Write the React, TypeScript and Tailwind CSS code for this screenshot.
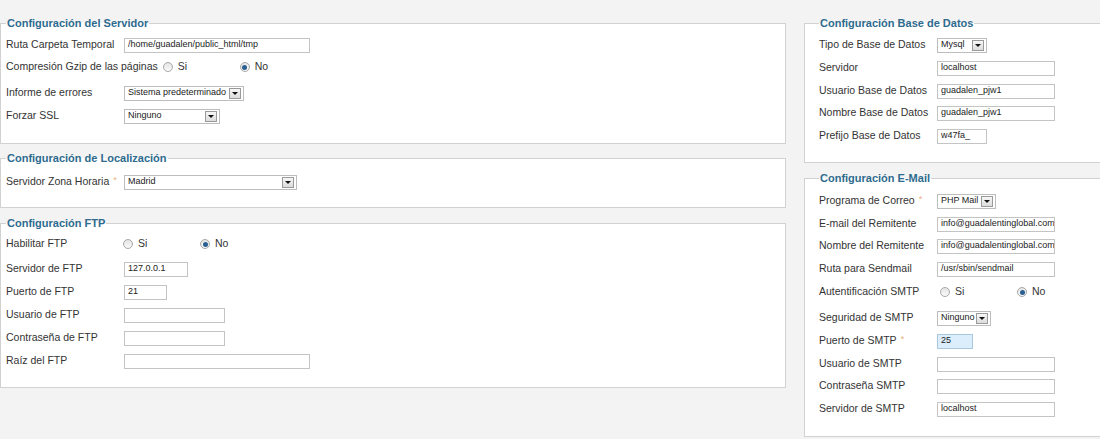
import React from "react";

const FONT = { fontFamily: '"Liberation Sans", Arial, sans-serif' };

function Label({ children, req, cls }: { children: React.ReactNode; req?: boolean; cls?: string }) {
  return (
    <div className={cls ?? "w-[118px] shrink-0"}>
      <span>{children}</span>
      {req && <span className="ml-[4px] text-[#eab07a] text-[9px] align-top">*</span>}
    </div>
  );
}

function Input({ value, w, blue }: { value?: string; w: string; blue?: boolean }) {
  return (
    <div
      className={
        w +
        " h-[15px] border flex items-center pl-[3px] text-[9px] text-[#222] overflow-hidden whitespace-nowrap " +
        (blue ? "bg-[#dcedfb] border-[#a9c8de]" : "bg-white border-[#c4c4c4]")
      }
    >
      {value}
    </div>
  );
}

function Select({ value, w }: { value: string; w: string }) {
  return (
    <div className={w + " h-[15px] border border-[#bdbdbd] bg-white flex items-center justify-between pl-[3px] pr-[2px] text-[9px] text-[#222] whitespace-nowrap"}>
      <span>{value}</span>
      <div className="w-[12px] h-[11px] border border-[#9a9a9a] bg-gradient-to-b from-[#f7f7f7] to-[#dcdcdc] flex items-center justify-center">
        <div className="w-0 h-0 border-l-[3px] border-r-[3px] border-t-[3px] border-l-transparent border-r-transparent border-t-[#111]" />
      </div>
    </div>
  );
}

function Radio({ checked }: { checked?: boolean }) {
  return (
    <div className="w-[10px] h-[10px] rounded-full border border-[#a8a8a8] bg-gradient-to-b from-[#e4e4e4] to-[#fafafa] flex items-center justify-center">
      {checked && <div className="w-[5px] h-[5px] rounded-full bg-[#2b5f93]" />}
    </div>
  );
}

function Radios({ ml }: { ml: string }) {
  return (
    <div className={"flex items-center " + ml}>
      <div className="w-[77px] flex items-center gap-[5px]">
        <Radio />
        <span>Si</span>
      </div>
      <div className="flex items-center gap-[5px]">
        <Radio checked />
        <span>No</span>
      </div>
    </div>
  );
}

function Row({ mt, children }: { mt: string; children: React.ReactNode }) {
  return <div className={"flex items-center h-[22px] " + mt}>{children}</div>;
}

function Box({
  title,
  children,
  cls,
  inner,
}: {
  title: string;
  children: React.ReactNode;
  cls: string;
  inner: string;
}) {
  return (
    <fieldset className={"bg-white border-[#d2d2d2] " + cls}>
      <legend className="px-[1px] text-[11px] leading-[16px] font-bold text-[#2e6b8e]">{title}</legend>
      <div className={inner}>{children}</div>
    </fieldset>
  );
}

export default function App() {
  return (
    <div style={FONT} className="w-[1100px] h-[439px] bg-[#f3f3f3] overflow-hidden text-[10.5px] text-[#333]">
      <div className="flex gap-[18px] pt-[15px]">
        {/* Left column */}
        <div className="w-[786px] shrink-0 flex flex-col">
          <Box title="Configuración del Servidor" cls="border pl-[5px] pr-[5px]" inner="pt-[3px] pb-[16px]">
            <Row mt="mt-0">
              <Label>Ruta Carpeta Temporal</Label>
              <Input w="w-[186px]" value="/home/guadalen/public_html/tmp" />
            </Row>
            <Row mt="mt-0">
              <Label cls="shrink-0 pr-[5px]">Compresión Gzip de las páginas</Label>
              <Radios ml="ml-0" />
            </Row>
            <Row mt="mt-[4px]">
              <Label>Informe de errores</Label>
              <Select w="w-[120px]" value="Sistema predeterminado" />
            </Row>
            <Row mt="mt-[1px]">
              <Label>Forzar SSL</Label>
              <Select w="w-[96px]" value="Ninguno" />
            </Row>
          </Box>

          <Box title="Configuración de Localización" cls="border pl-[5px] pr-[5px] mt-[6px]" inner="pt-[5px] pb-[14px]">
            <Row mt="mt-0">
              <Label req>Servidor Zona Horaria</Label>
              <Select w="w-[173px]" value="Madrid" />
            </Row>
          </Box>

          <Box title="Configuración FTP" cls="border pl-[5px] pr-[5px] mt-[7px]" inner="pt-[2px] pb-[15px]">
            <Row mt="mt-0">
              <Label>Habilitar FTP</Label>
              <Radios ml="-ml-[1px]" />
            </Row>
            <Row mt="mt-[3px]">
              <Label>Servidor de FTP</Label>
              <Input w="w-[64px]" value="127.0.0.1" />
            </Row>
            <Row mt="mt-[1px]">
              <Label>Puerto de FTP</Label>
              <Input w="w-[43px]" value="21" />
            </Row>
            <Row mt="mt-[1px]">
              <Label>Usuario de FTP</Label>
              <Input w="w-[101px]" />
            </Row>
            <Row mt="mt-[1px]">
              <Label>Contraseña de FTP</Label>
              <Input w="w-[101px]" />
            </Row>
            <Row mt="mt-[1px]">
              <Label>Raíz del FTP</Label>
              <Input w="w-[186px]" />
            </Row>
          </Box>
        </div>

        {/* Right column */}
        <div className="w-[296px] shrink-0 flex flex-col">
          <Box title="Configuración Base de Datos" cls="border border-r-0 pl-[14px]" inner="pt-[3px] pb-[15px]">
            <Row mt="mt-0">
              <Label>Tipo de Base de Datos</Label>
              <Select w="w-[50px]" value="Mysql" />
            </Row>
            <Row mt="mt-[1px]">
              <Label>Servidor</Label>
              <Input w="w-[118px]" value="localhost" />
            </Row>
            <Row mt="mt-[1px]">
              <Label>Usuario Base de Datos</Label>
              <Input w="w-[118px]" value="guadalen_pjw1" />
            </Row>
            <Row mt="mt-0">
              <Label>Nombre Base de Datos</Label>
              <Input w="w-[118px]" value="guadalen_pjw1" />
            </Row>
            <Row mt="mt-[1px]">
              <Label>Prefijo Base de Datos</Label>
              <Input w="w-[50px]" value="w47fa_" />
            </Row>
          </Box>

          <Box title="Configuración E-Mail" cls="border border-r-0 pl-[14px] mt-[7px]" inner="pt-[4px] pb-[16px]">
            <Row mt="mt-0">
              <Label req>Programa de Correo</Label>
              <Select w="w-[59px]" value="PHP Mail" />
            </Row>
            <Row mt="mt-[1px]">
              <Label>E-mail del Remitente</Label>
              <Input w="w-[118px]" value="info@guadalentinglobal.com" />
            </Row>
            <Row mt="mt-0">
              <Label>Nombre del Remitente</Label>
              <Input w="w-[118px]" value="info@guadalentinglobal.com" />
            </Row>
            <Row mt="mt-[1px]">
              <Label>Ruta para Sendmail</Label>
              <Input w="w-[118px]" value="/usr/sbin/sendmail" />
            </Row>
            <Row mt="mt-[1px]">
              <Label>Autentificación SMTP</Label>
              <Radios ml="ml-[3px]" />
            </Row>
            <Row mt="mt-[4px]">
              <Label>Seguridad de SMTP</Label>
              <Select w="w-[54px]" value="Ninguno" />
            </Row>
            <Row mt="mt-[1px]">
              <Label req>Puerto de SMTP</Label>
              <Input w="w-[36px]" value="25" blue />
            </Row>
            <Row mt="mt-[1px]">
              <Label>Usuario de SMTP</Label>
              <Input w="w-[118px]" />
            </Row>
            <Row mt="mt-0">
              <Label>Contraseña SMTP</Label>
              <Input w="w-[118px]" />
            </Row>
            <Row mt="mt-[1px]">
              <Label>Servidor de SMTP</Label>
              <Input w="w-[118px]" value="localhost" />
            </Row>
          </Box>
        </div>
      </div>
    </div>
  );
}
